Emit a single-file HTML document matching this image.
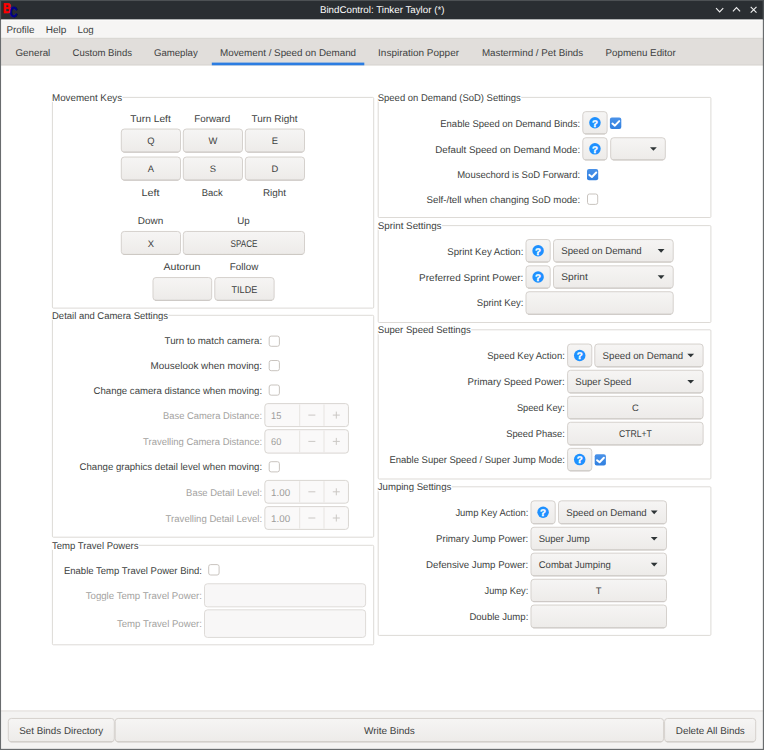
<!DOCTYPE html>
<html lang="en">
<head>
<meta charset="utf-8">
<title>BindControl: Tinker Taylor (*)</title>
<style>
html,body{margin:0;padding:0;background:#fff;overflow:hidden}
svg{display:block;font-family:"Liberation Sans",sans-serif;text-rendering:geometricPrecision}
</style>
</head>
<body>
<svg width="764" height="750" viewBox="0 0 764 750">
<defs><linearGradient id="bg" x1="0" y1="0" x2="0" y2="1"><stop offset="0" stop-color="#f6f5f4"/><stop offset="1" stop-color="#edebe9"/></linearGradient><linearGradient id="cb" x1="0" y1="0" x2="0" y2="1"><stop offset="0" stop-color="#4a92e8"/><stop offset="1" stop-color="#3180e0"/></linearGradient></defs>
<rect x="0.00" y="0.00" width="764.00" height="750.00" fill="#ffffff"/>
<rect x="0.00" y="0.00" width="764.00" height="19.70" fill="#2a2e32"/>
<rect x="0.00" y="19.70" width="764.00" height="18.30" fill="#f6f5f4"/>
<rect x="0.00" y="19.70" width="764.00" height="0.90" fill="#fcfcfb"/>
<rect x="0.00" y="38.00" width="764.00" height="27.40" fill="#e1dedb"/>
<rect x="0.00" y="64.30" width="764.00" height="1.10" fill="#d9d6d3"/>
<rect x="0.00" y="37.80" width="764.00" height="1.00" fill="#d9d6d3"/>
<rect x="0.00" y="710.20" width="764.00" height="39.80" fill="#f4f3f2"/>
<rect x="0.00" y="710.20" width="764.00" height="1.60" fill="#e9e7e4"/>
<rect x="0.00" y="0.00" width="1.05" height="750.00" fill="#696c6e"/>
<rect x="762.85" y="0.00" width="1.15" height="750.00" fill="#696c6e"/>
<rect x="0.00" y="748.85" width="764.00" height="1.15" fill="#696c6e"/>
<rect x="0.00" y="0.00" width="764.00" height="1.05" fill="#4d5154"/>
<rect x="0.00" y="1.00" width="1.05" height="18.70" fill="#4d5154"/>
<rect x="762.85" y="1.00" width="1.15" height="18.70" fill="#4d5154"/>
<text transform="translate(3.1,13.3) scale(0.8,1)" font-size="14" font-weight="bold" fill="#ff0000" stroke="#ff0000" stroke-width="0.7">B</text>
<text transform="translate(9.8,16.8) scale(0.74,1)" font-size="14.4" font-weight="bold" fill="#00008b" stroke="#00008b" stroke-width="0.7">C</text>
<text x="382.20" y="13.15" font-size="9.8" fill="#fcfcfc" text-anchor="middle" textLength="124.50" lengthAdjust="spacingAndGlyphs">BindControl: Tinker Taylor (*)</text>
<path d="M716.05 8.2L719.65 11.9L723.25 8.2" stroke="#eeeeee" stroke-width="1.15" fill="none"/>
<path d="M732.9 11.4L736.5 7.6L740.1 11.4" stroke="#eeeeee" stroke-width="1.15" fill="none"/>
<path d="M750.7 6.8L756.5 12.6M756.5 6.8L750.7 12.6" stroke="#eeeeee" stroke-width="1.15" fill="none"/>
<text x="6.40" y="33.05" font-size="9.8" fill="#3d3f41" textLength="28.00" lengthAdjust="spacingAndGlyphs">Profile</text>
<text x="45.70" y="33.05" font-size="9.8" fill="#3d3f41" textLength="20.70" lengthAdjust="spacingAndGlyphs">Help</text>
<text x="77.50" y="33.05" font-size="9.8" fill="#3d3f41" textLength="16.20" lengthAdjust="spacingAndGlyphs">Log</text>
<text x="15.40" y="55.65" font-size="9.8" fill="#3d3f41" textLength="34.90" lengthAdjust="spacingAndGlyphs">General</text>
<text x="72.50" y="55.65" font-size="9.8" fill="#3d3f41" textLength="59.50" lengthAdjust="spacingAndGlyphs">Custom Binds</text>
<text x="153.90" y="55.65" font-size="9.8" fill="#3d3f41" textLength="43.90" lengthAdjust="spacingAndGlyphs">Gameplay</text>
<text x="220.00" y="55.65" font-size="9.8" fill="#3d3f41" textLength="136.10" lengthAdjust="spacingAndGlyphs">Movement / Speed on Demand</text>
<text x="378.10" y="55.65" font-size="9.8" fill="#3d3f41" textLength="80.90" lengthAdjust="spacingAndGlyphs">Inspiration Popper</text>
<text x="481.90" y="55.65" font-size="9.8" fill="#3d3f41" textLength="101.30" lengthAdjust="spacingAndGlyphs">Mastermind / Pet Binds</text>
<text x="605.50" y="55.65" font-size="9.8" fill="#3d3f41" textLength="70.20" lengthAdjust="spacingAndGlyphs">Popmenu Editor</text>
<rect x="211.80" y="62.60" width="152.50" height="2.70" fill="#2c7de2"/>
<rect x="52.40" y="97.40" width="321.30" height="210.70" rx="1" fill="none" stroke="#d7d3cf" stroke-width="0.85"/>
<rect x="51.90" y="91.90" width="70.60" height="10.00" fill="#ffffff"/>
<text x="52.00" y="100.85" font-size="9.8" fill="#3d3f41" textLength="70.10" lengthAdjust="spacingAndGlyphs">Movement Keys</text>
<text x="150.50" y="121.75" font-size="9.8" fill="#3d3f41" text-anchor="middle" textLength="40.50" lengthAdjust="spacingAndGlyphs">Turn Left</text>
<text x="212.30" y="121.75" font-size="9.8" fill="#3d3f41" text-anchor="middle" textLength="36.00" lengthAdjust="spacingAndGlyphs">Forward</text>
<text x="274.50" y="121.75" font-size="9.8" fill="#3d3f41" text-anchor="middle" textLength="46.00" lengthAdjust="spacingAndGlyphs">Turn Right</text>
<rect x="121.30" y="129.05" width="59.20" height="23.10" rx="3" fill="url(#bg)" stroke="#d5d1cd" stroke-width="1"/>
<path d="M123.30 152.15H178.50" stroke="#ccc8c4" stroke-width="1" fill="none"/>
<text x="151.00" y="143.81" font-size="9.4" fill="#3d3f41" text-anchor="middle">Q</text>
<rect x="183.30" y="129.05" width="59.20" height="23.10" rx="3" fill="url(#bg)" stroke="#d5d1cd" stroke-width="1"/>
<path d="M185.30 152.15H240.50" stroke="#ccc8c4" stroke-width="1" fill="none"/>
<text x="213.00" y="143.81" font-size="9.4" fill="#3d3f41" text-anchor="middle">W</text>
<rect x="245.30" y="129.05" width="59.20" height="23.10" rx="3" fill="url(#bg)" stroke="#d5d1cd" stroke-width="1"/>
<path d="M247.30 152.15H302.50" stroke="#ccc8c4" stroke-width="1" fill="none"/>
<text x="275.00" y="143.81" font-size="9.4" fill="#3d3f41" text-anchor="middle">E</text>
<rect x="121.30" y="157.05" width="59.20" height="23.10" rx="3" fill="url(#bg)" stroke="#d5d1cd" stroke-width="1"/>
<path d="M123.30 180.15H178.50" stroke="#ccc8c4" stroke-width="1" fill="none"/>
<text x="151.00" y="171.91" font-size="9.4" fill="#3d3f41" text-anchor="middle">A</text>
<rect x="183.30" y="157.05" width="59.20" height="23.10" rx="3" fill="url(#bg)" stroke="#d5d1cd" stroke-width="1"/>
<path d="M185.30 180.15H240.50" stroke="#ccc8c4" stroke-width="1" fill="none"/>
<text x="213.00" y="171.91" font-size="9.4" fill="#3d3f41" text-anchor="middle">S</text>
<rect x="245.30" y="157.05" width="59.20" height="23.10" rx="3" fill="url(#bg)" stroke="#d5d1cd" stroke-width="1"/>
<path d="M247.30 180.15H302.50" stroke="#ccc8c4" stroke-width="1" fill="none"/>
<text x="275.00" y="171.91" font-size="9.4" fill="#3d3f41" text-anchor="middle">D</text>
<text x="150.50" y="195.85" font-size="9.8" fill="#3d3f41" text-anchor="middle" textLength="18.00" lengthAdjust="spacingAndGlyphs">Left</text>
<text x="212.30" y="195.85" font-size="9.8" fill="#3d3f41" text-anchor="middle" textLength="21.00" lengthAdjust="spacingAndGlyphs">Back</text>
<text x="274.50" y="195.85" font-size="9.8" fill="#3d3f41" text-anchor="middle" textLength="23.00" lengthAdjust="spacingAndGlyphs">Right</text>
<text x="150.50" y="224.25" font-size="9.8" fill="#3d3f41" text-anchor="middle" textLength="25.50" lengthAdjust="spacingAndGlyphs">Down</text>
<text x="243.50" y="224.25" font-size="9.8" fill="#3d3f41" text-anchor="middle" textLength="12.50" lengthAdjust="spacingAndGlyphs">Up</text>
<rect x="121.30" y="231.45" width="59.20" height="23.00" rx="3" fill="url(#bg)" stroke="#d5d1cd" stroke-width="1"/>
<path d="M123.30 254.45H178.50" stroke="#ccc8c4" stroke-width="1" fill="none"/>
<text x="151.00" y="246.81" font-size="9.4" fill="#3d3f41" text-anchor="middle">X</text>
<rect x="183.30" y="231.45" width="121.20" height="23.00" rx="3" fill="url(#bg)" stroke="#d5d1cd" stroke-width="1"/>
<path d="M185.30 254.45H302.50" stroke="#ccc8c4" stroke-width="1" fill="none"/>
<text x="244.00" y="247.05" font-size="9.8" fill="#3d3f41" text-anchor="middle" textLength="26.90" lengthAdjust="spacingAndGlyphs">SPACE</text>
<text x="182.00" y="270.45" font-size="9.8" fill="#3d3f41" text-anchor="middle" textLength="37.00" lengthAdjust="spacingAndGlyphs">Autorun</text>
<text x="244.00" y="270.45" font-size="9.8" fill="#3d3f41" text-anchor="middle" textLength="28.50" lengthAdjust="spacingAndGlyphs">Follow</text>
<rect x="153.00" y="277.55" width="58.70" height="22.80" rx="3" fill="url(#bg)" stroke="#d5d1cd" stroke-width="1"/>
<path d="M155.00 300.35H209.70" stroke="#ccc8c4" stroke-width="1" fill="none"/>
<rect x="214.80" y="277.55" width="59.30" height="22.80" rx="3" fill="url(#bg)" stroke="#d5d1cd" stroke-width="1"/>
<path d="M216.80 300.35H272.10" stroke="#ccc8c4" stroke-width="1" fill="none"/>
<text x="244.40" y="293.05" font-size="9.8" fill="#3d3f41" text-anchor="middle" textLength="25.70" lengthAdjust="spacingAndGlyphs">TILDE</text>
<rect x="52.40" y="315.30" width="321.30" height="221.90" rx="1" fill="none" stroke="#d7d3cf" stroke-width="0.85"/>
<rect x="51.90" y="309.80" width="116.50" height="10.00" fill="#ffffff"/>
<text x="52.00" y="318.75" font-size="9.8" fill="#3d3f41" textLength="116.00" lengthAdjust="spacingAndGlyphs">Detail and Camera Settings</text>
<text x="262.10" y="344.45" font-size="9.8" fill="#3d3f41" text-anchor="end" textLength="97.50" lengthAdjust="spacingAndGlyphs">Turn to match camera:</text>
<text x="262.10" y="368.95" font-size="9.8" fill="#3d3f41" text-anchor="end" textLength="111.50" lengthAdjust="spacingAndGlyphs">Mouselook when moving:</text>
<text x="262.10" y="393.65" font-size="9.8" fill="#3d3f41" text-anchor="end" textLength="168.50" lengthAdjust="spacingAndGlyphs">Change camera distance when moving:</text>
<text x="262.10" y="418.85" font-size="9.8" fill="#a3a2a0" text-anchor="end" textLength="99.00" lengthAdjust="spacingAndGlyphs">Base Camera Distance:</text>
<text x="262.10" y="444.85" font-size="9.8" fill="#a3a2a0" text-anchor="end" textLength="119.00" lengthAdjust="spacingAndGlyphs">Travelling Camera Distance:</text>
<text x="262.10" y="470.15" font-size="9.8" fill="#3d3f41" text-anchor="end" textLength="182.50" lengthAdjust="spacingAndGlyphs">Change graphics detail level when moving:</text>
<text x="262.10" y="495.85" font-size="9.8" fill="#a3a2a0" text-anchor="end" textLength="76.00" lengthAdjust="spacingAndGlyphs">Base Detail Level:</text>
<text x="262.10" y="522.05" font-size="9.8" fill="#a3a2a0" text-anchor="end" textLength="96.50" lengthAdjust="spacingAndGlyphs">Travelling Detail Level:</text>
<rect x="269.20" y="336.10" width="10.20" height="10.20" rx="2" fill="#ffffff" stroke="#c9c4bf" stroke-width="1"/>
<rect x="269.20" y="360.50" width="10.20" height="10.20" rx="2" fill="#ffffff" stroke="#c9c4bf" stroke-width="1"/>
<rect x="269.20" y="385.00" width="10.20" height="10.20" rx="2" fill="#ffffff" stroke="#c9c4bf" stroke-width="1"/>
<rect x="269.20" y="461.70" width="10.20" height="10.20" rx="2" fill="#ffffff" stroke="#c9c4bf" stroke-width="1"/>
<rect x="264.85" y="403.60" width="83.60" height="23.00" rx="3" fill="#faf9f9" stroke="#d9d6d2" stroke-width="1"/>
<path d="M299.70 404.40V425.80M324.00 404.40V425.80" stroke="#e7e4e1" stroke-width="1" fill="none"/>
<text x="271.10" y="418.55" font-size="9.8" fill="#9d9c9a" textLength="10.30" lengthAdjust="spacingAndGlyphs">15</text>
<path d="M308.35 415.10H315.35M332.80 415.10H339.80M336.30 411.60V418.60" stroke="#cac7c4" stroke-width="1" fill="none"/>
<rect x="264.85" y="429.70" width="83.60" height="23.40" rx="3" fill="#faf9f9" stroke="#d9d6d2" stroke-width="1"/>
<path d="M299.70 430.50V452.30M324.00 430.50V452.30" stroke="#e7e4e1" stroke-width="1" fill="none"/>
<text x="271.10" y="444.85" font-size="9.8" fill="#9d9c9a" textLength="10.30" lengthAdjust="spacingAndGlyphs">60</text>
<path d="M308.35 441.40H315.35M332.80 441.40H339.80M336.30 437.90V444.90" stroke="#cac7c4" stroke-width="1" fill="none"/>
<rect x="264.85" y="480.40" width="83.60" height="22.80" rx="3" fill="#faf9f9" stroke="#d9d6d2" stroke-width="1"/>
<path d="M299.70 481.20V502.40M324.00 481.20V502.40" stroke="#e7e4e1" stroke-width="1" fill="none"/>
<text x="271.10" y="495.75" font-size="9.8" fill="#9d9c9a" textLength="19.10" lengthAdjust="spacingAndGlyphs">1.00</text>
<path d="M308.35 491.80H315.35M332.80 491.80H339.80M336.30 488.30V495.30" stroke="#cac7c4" stroke-width="1" fill="none"/>
<rect x="264.85" y="506.60" width="83.60" height="22.80" rx="3" fill="#faf9f9" stroke="#d9d6d2" stroke-width="1"/>
<path d="M299.70 507.40V528.60M324.00 507.40V528.60" stroke="#e7e4e1" stroke-width="1" fill="none"/>
<text x="271.10" y="521.95" font-size="9.8" fill="#9d9c9a" textLength="19.10" lengthAdjust="spacingAndGlyphs">1.00</text>
<path d="M308.35 518.00H315.35M332.80 518.00H339.80M336.30 514.50V521.50" stroke="#cac7c4" stroke-width="1" fill="none"/>
<rect x="52.40" y="545.30" width="321.30" height="99.50" rx="1" fill="none" stroke="#d7d3cf" stroke-width="0.85"/>
<rect x="51.90" y="539.80" width="87.00" height="10.00" fill="#ffffff"/>
<text x="52.00" y="548.75" font-size="9.8" fill="#3d3f41" textLength="86.50" lengthAdjust="spacingAndGlyphs">Temp Travel Powers</text>
<text x="201.90" y="573.65" font-size="9.8" fill="#3d3f41" text-anchor="end" textLength="138.00" lengthAdjust="spacingAndGlyphs">Enable Temp Travel Power Bind:</text>
<text x="201.90" y="598.95" font-size="9.8" fill="#a3a2a0" text-anchor="end" textLength="116.20" lengthAdjust="spacingAndGlyphs">Toggle Temp Travel Power:</text>
<text x="201.90" y="627.25" font-size="9.8" fill="#a3a2a0" text-anchor="end" textLength="85.00" lengthAdjust="spacingAndGlyphs">Temp Travel Power:</text>
<rect x="208.70" y="564.60" width="10.40" height="10.40" rx="2" fill="#ffffff" stroke="#c9c4bf" stroke-width="1"/>
<rect x="204.50" y="583.75" width="161.10" height="23.10" rx="3" fill="#f8f7f7" stroke="#deDBd8" stroke-width="1"/>
<rect x="204.50" y="609.85" width="161.10" height="27.60" rx="3" fill="#f8f7f7" stroke="#deDBd8" stroke-width="1"/>
<rect x="378.20" y="97.40" width="332.70" height="120.10" rx="1" fill="none" stroke="#d7d3cf" stroke-width="0.85"/>
<rect x="377.70" y="91.90" width="143.50" height="10.00" fill="#ffffff"/>
<text x="377.80" y="100.85" font-size="9.8" fill="#3d3f41" textLength="143.00" lengthAdjust="spacingAndGlyphs">Speed on Demand (SoD) Settings</text>
<text x="580.20" y="126.75" font-size="9.8" fill="#3d3f41" text-anchor="end" textLength="139.90" lengthAdjust="spacingAndGlyphs">Enable Speed on Demand Binds:</text>
<text x="580.20" y="152.85" font-size="9.8" fill="#3d3f41" text-anchor="end" textLength="144.90" lengthAdjust="spacingAndGlyphs">Default Speed on Demand Mode:</text>
<text x="580.20" y="178.25" font-size="9.8" fill="#3d3f41" text-anchor="end" textLength="123.00" lengthAdjust="spacingAndGlyphs">Mousechord is SoD Forward:</text>
<text x="580.20" y="202.85" font-size="9.8" fill="#3d3f41" text-anchor="end" textLength="153.60" lengthAdjust="spacingAndGlyphs">Self-/tell when changing SoD mode:</text>
<rect x="582.80" y="111.65" width="24.30" height="22.30" rx="3" fill="url(#bg)" stroke="#d5d1cd" stroke-width="1"/>
<path d="M584.80 133.95H605.10" stroke="#ccc8c4" stroke-width="1" fill="none"/>
<circle cx="594.95" cy="122.80" r="5.75" fill="#1e90ff"/>
<text x="594.95" y="126.55" font-size="9.8" fill="#ffffff" text-anchor="middle" font-weight="bold" stroke="#fff" stroke-width="0.35">?</text>
<rect x="609.90" y="117.60" width="11.40" height="11.30" rx="2" fill="url(#cb)"/>
<path d="M612.40 123.55L614.90 125.65L619.20 121.15" stroke="#fff" stroke-width="2" fill="none" stroke-linecap="round" stroke-linejoin="round"/>
<rect x="582.80" y="137.75" width="24.30" height="22.20" rx="3" fill="url(#bg)" stroke="#d5d1cd" stroke-width="1"/>
<path d="M584.80 159.95H605.10" stroke="#ccc8c4" stroke-width="1" fill="none"/>
<circle cx="594.95" cy="148.85" r="5.75" fill="#1e90ff"/>
<text x="594.95" y="152.60" font-size="9.8" fill="#ffffff" text-anchor="middle" font-weight="bold" stroke="#fff" stroke-width="0.35">?</text>
<rect x="610.70" y="137.75" width="54.60" height="22.20" rx="3" fill="url(#bg)" stroke="#d5d1cd" stroke-width="1"/>
<path d="M612.70 159.95H663.30" stroke="#ccc8c4" stroke-width="1" fill="none"/>
<path d="M650.00 147.15H656.80L653.40 150.75Z" fill="#2e3436"/>
<rect x="587.00" y="169.00" width="11.20" height="11.20" rx="2" fill="url(#cb)"/>
<path d="M589.40 174.90L591.90 177.00L596.20 172.50" stroke="#fff" stroke-width="2" fill="none" stroke-linecap="round" stroke-linejoin="round"/>
<rect x="587.50" y="194.00" width="10.20" height="10.40" rx="2" fill="#ffffff" stroke="#c9c4bf" stroke-width="1"/>
<rect x="378.20" y="225.60" width="332.70" height="96.90" rx="1" fill="none" stroke="#d7d3cf" stroke-width="0.85"/>
<rect x="377.70" y="220.10" width="64.20" height="10.00" fill="#ffffff"/>
<text x="377.80" y="229.05" font-size="9.8" fill="#3d3f41" textLength="63.70" lengthAdjust="spacingAndGlyphs">Sprint Settings</text>
<text x="523.40" y="254.65" font-size="9.8" fill="#3d3f41" text-anchor="end" textLength="76.20" lengthAdjust="spacingAndGlyphs">Sprint Key Action:</text>
<text x="523.40" y="280.75" font-size="9.8" fill="#3d3f41" text-anchor="end" textLength="104.30" lengthAdjust="spacingAndGlyphs">Preferred Sprint Power:</text>
<text x="523.40" y="306.45" font-size="9.8" fill="#3d3f41" text-anchor="end" textLength="46.60" lengthAdjust="spacingAndGlyphs">Sprint Key:</text>
<rect x="526.00" y="239.55" width="24.20" height="22.50" rx="3" fill="url(#bg)" stroke="#d5d1cd" stroke-width="1"/>
<path d="M528.00 262.05H548.20" stroke="#ccc8c4" stroke-width="1" fill="none"/>
<circle cx="538.10" cy="250.80" r="5.75" fill="#1e90ff"/>
<text x="538.10" y="254.55" font-size="9.8" fill="#ffffff" text-anchor="middle" font-weight="bold" stroke="#fff" stroke-width="0.35">?</text>
<rect x="553.50" y="239.55" width="119.70" height="22.50" rx="3" fill="url(#bg)" stroke="#d5d1cd" stroke-width="1"/>
<path d="M555.50 262.05H671.20" stroke="#ccc8c4" stroke-width="1" fill="none"/>
<text x="561.30" y="254.25" font-size="9.8" fill="#3d3f41" textLength="80.40" lengthAdjust="spacingAndGlyphs">Speed on Demand</text>
<path d="M657.70 249.10H664.50L661.10 252.70Z" fill="#2e3436"/>
<rect x="526.00" y="265.85" width="24.20" height="22.30" rx="3" fill="url(#bg)" stroke="#d5d1cd" stroke-width="1"/>
<path d="M528.00 288.15H548.20" stroke="#ccc8c4" stroke-width="1" fill="none"/>
<circle cx="538.10" cy="277.00" r="5.75" fill="#1e90ff"/>
<text x="538.10" y="280.75" font-size="9.8" fill="#ffffff" text-anchor="middle" font-weight="bold" stroke="#fff" stroke-width="0.35">?</text>
<rect x="553.50" y="265.85" width="119.70" height="22.30" rx="3" fill="url(#bg)" stroke="#d5d1cd" stroke-width="1"/>
<path d="M555.50 288.15H671.20" stroke="#ccc8c4" stroke-width="1" fill="none"/>
<text x="561.30" y="280.45" font-size="9.8" fill="#3d3f41" textLength="26.50" lengthAdjust="spacingAndGlyphs">Sprint</text>
<path d="M657.70 275.30H664.50L661.10 278.90Z" fill="#2e3436"/>
<rect x="526.00" y="291.75" width="147.20" height="22.50" rx="3" fill="url(#bg)" stroke="#d5d1cd" stroke-width="1"/>
<path d="M528.00 314.25H671.20" stroke="#ccc8c4" stroke-width="1" fill="none"/>
<rect x="378.20" y="329.80" width="332.70" height="149.20" rx="1" fill="none" stroke="#d7d3cf" stroke-width="0.85"/>
<rect x="377.70" y="324.30" width="93.50" height="10.00" fill="#ffffff"/>
<text x="377.80" y="333.25" font-size="9.8" fill="#3d3f41" textLength="93.00" lengthAdjust="spacingAndGlyphs">Super Speed Settings</text>
<text x="564.80" y="359.25" font-size="9.8" fill="#3d3f41" text-anchor="end" textLength="77.50" lengthAdjust="spacingAndGlyphs">Speed Key Action:</text>
<text x="564.80" y="385.35" font-size="9.8" fill="#3d3f41" text-anchor="end" textLength="97.20" lengthAdjust="spacingAndGlyphs">Primary Speed Power:</text>
<text x="564.80" y="411.25" font-size="9.8" fill="#3d3f41" text-anchor="end" textLength="47.90" lengthAdjust="spacingAndGlyphs">Speed Key:</text>
<text x="564.80" y="437.35" font-size="9.8" fill="#3d3f41" text-anchor="end" textLength="58.60" lengthAdjust="spacingAndGlyphs">Speed Phase:</text>
<text x="564.80" y="463.25" font-size="9.8" fill="#3d3f41" text-anchor="end" textLength="175.30" lengthAdjust="spacingAndGlyphs">Enable Super Speed / Super Jump Mode:</text>
<rect x="567.60" y="344.05" width="24.20" height="22.80" rx="3" fill="url(#bg)" stroke="#d5d1cd" stroke-width="1"/>
<path d="M569.60 366.85H589.80" stroke="#ccc8c4" stroke-width="1" fill="none"/>
<circle cx="579.70" cy="355.45" r="5.75" fill="#1e90ff"/>
<text x="579.70" y="359.20" font-size="9.8" fill="#ffffff" text-anchor="middle" font-weight="bold" stroke="#fff" stroke-width="0.35">?</text>
<rect x="594.80" y="344.05" width="108.30" height="22.80" rx="3" fill="url(#bg)" stroke="#d5d1cd" stroke-width="1"/>
<path d="M596.80 366.85H701.10" stroke="#ccc8c4" stroke-width="1" fill="none"/>
<text x="602.60" y="358.90" font-size="9.8" fill="#3d3f41" textLength="80.60" lengthAdjust="spacingAndGlyphs">Speed on Demand</text>
<path d="M687.30 353.75H694.10L690.70 357.35Z" fill="#2e3436"/>
<rect x="567.60" y="370.25" width="135.50" height="22.70" rx="3" fill="url(#bg)" stroke="#d5d1cd" stroke-width="1"/>
<path d="M569.60 392.95H701.10" stroke="#ccc8c4" stroke-width="1" fill="none"/>
<text x="575.30" y="385.05" font-size="9.8" fill="#3d3f41" textLength="56.00" lengthAdjust="spacingAndGlyphs">Super Speed</text>
<path d="M687.30 379.90H694.10L690.70 383.50Z" fill="#2e3436"/>
<rect x="567.60" y="396.35" width="135.50" height="22.50" rx="3" fill="url(#bg)" stroke="#d5d1cd" stroke-width="1"/>
<path d="M569.60 418.85H701.10" stroke="#ccc8c4" stroke-width="1" fill="none"/>
<text x="635.40" y="411.21" font-size="9.4" fill="#3d3f41" text-anchor="middle">C</text>
<rect x="567.60" y="422.25" width="135.50" height="22.70" rx="3" fill="url(#bg)" stroke="#d5d1cd" stroke-width="1"/>
<path d="M569.60 444.95H701.10" stroke="#ccc8c4" stroke-width="1" fill="none"/>
<text x="635.40" y="437.35" font-size="9.8" fill="#3d3f41" text-anchor="middle" textLength="33.00" lengthAdjust="spacingAndGlyphs">CTRL+T</text>
<rect x="567.60" y="448.35" width="24.20" height="22.50" rx="3" fill="url(#bg)" stroke="#d5d1cd" stroke-width="1"/>
<path d="M569.60 470.85H589.80" stroke="#ccc8c4" stroke-width="1" fill="none"/>
<circle cx="579.70" cy="459.60" r="5.75" fill="#1e90ff"/>
<text x="579.70" y="463.35" font-size="9.8" fill="#ffffff" text-anchor="middle" font-weight="bold" stroke="#fff" stroke-width="0.35">?</text>
<rect x="594.70" y="454.30" width="11.20" height="11.20" rx="2" fill="url(#cb)"/>
<path d="M597.10 460.20L599.60 462.30L603.90 457.80" stroke="#fff" stroke-width="2" fill="none" stroke-linecap="round" stroke-linejoin="round"/>
<rect x="378.20" y="486.80" width="332.70" height="148.60" rx="1" fill="none" stroke="#d7d3cf" stroke-width="0.85"/>
<rect x="377.70" y="481.30" width="74.00" height="10.00" fill="#ffffff"/>
<text x="377.80" y="490.25" font-size="9.8" fill="#3d3f41" textLength="73.50" lengthAdjust="spacingAndGlyphs">Jumping Settings</text>
<text x="528.30" y="516.25" font-size="9.8" fill="#3d3f41" text-anchor="end" textLength="72.90" lengthAdjust="spacingAndGlyphs">Jump Key Action:</text>
<text x="528.30" y="542.35" font-size="9.8" fill="#3d3f41" text-anchor="end" textLength="92.30" lengthAdjust="spacingAndGlyphs">Primary Jump Power:</text>
<text x="528.30" y="568.25" font-size="9.8" fill="#3d3f41" text-anchor="end" textLength="102.20" lengthAdjust="spacingAndGlyphs">Defensive Jump Power:</text>
<text x="528.30" y="594.35" font-size="9.8" fill="#3d3f41" text-anchor="end" textLength="43.80" lengthAdjust="spacingAndGlyphs">Jump Key:</text>
<text x="528.30" y="620.25" font-size="9.8" fill="#3d3f41" text-anchor="end" textLength="58.90" lengthAdjust="spacingAndGlyphs">Double Jump:</text>
<rect x="531.00" y="500.85" width="24.20" height="22.90" rx="3" fill="url(#bg)" stroke="#d5d1cd" stroke-width="1"/>
<path d="M533.00 523.75H553.20" stroke="#ccc8c4" stroke-width="1" fill="none"/>
<circle cx="543.10" cy="512.30" r="5.75" fill="#1e90ff"/>
<text x="543.10" y="516.05" font-size="9.8" fill="#ffffff" text-anchor="middle" font-weight="bold" stroke="#fff" stroke-width="0.35">?</text>
<rect x="558.50" y="500.85" width="108.00" height="22.90" rx="3" fill="url(#bg)" stroke="#d5d1cd" stroke-width="1"/>
<path d="M560.50 523.75H664.50" stroke="#ccc8c4" stroke-width="1" fill="none"/>
<text x="566.30" y="515.75" font-size="9.8" fill="#3d3f41" textLength="80.30" lengthAdjust="spacingAndGlyphs">Speed on Demand</text>
<path d="M650.80 510.60H657.60L654.20 514.20Z" fill="#2e3436"/>
<rect x="531.00" y="527.25" width="135.50" height="22.70" rx="3" fill="url(#bg)" stroke="#d5d1cd" stroke-width="1"/>
<path d="M533.00 549.95H664.50" stroke="#ccc8c4" stroke-width="1" fill="none"/>
<text x="538.70" y="542.05" font-size="9.8" fill="#3d3f41" textLength="51.10" lengthAdjust="spacingAndGlyphs">Super Jump</text>
<path d="M650.80 536.90H657.60L654.20 540.50Z" fill="#2e3436"/>
<rect x="531.00" y="553.15" width="135.50" height="22.70" rx="3" fill="url(#bg)" stroke="#d5d1cd" stroke-width="1"/>
<path d="M533.00 575.85H664.50" stroke="#ccc8c4" stroke-width="1" fill="none"/>
<text x="538.70" y="567.95" font-size="9.8" fill="#3d3f41" textLength="72.10" lengthAdjust="spacingAndGlyphs">Combat Jumping</text>
<path d="M650.80 562.80H657.60L654.20 566.40Z" fill="#2e3436"/>
<rect x="531.00" y="579.25" width="135.50" height="22.40" rx="3" fill="url(#bg)" stroke="#d5d1cd" stroke-width="1"/>
<path d="M533.00 601.65H664.50" stroke="#ccc8c4" stroke-width="1" fill="none"/>
<text x="598.60" y="594.01" font-size="9.4" fill="#3d3f41" text-anchor="middle">T</text>
<rect x="531.00" y="605.05" width="135.50" height="22.80" rx="3" fill="url(#bg)" stroke="#d5d1cd" stroke-width="1"/>
<path d="M533.00 627.85H664.50" stroke="#ccc8c4" stroke-width="1" fill="none"/>
<rect x="8.30" y="718.45" width="106.00" height="23.40" rx="3" fill="url(#bg)" stroke="#d5d1cd" stroke-width="1"/>
<path d="M10.30 741.85H112.30" stroke="#ccc8c4" stroke-width="1" fill="none"/>
<text x="61.20" y="733.65" font-size="9.8" fill="#3d3f41" text-anchor="middle" textLength="84.00" lengthAdjust="spacingAndGlyphs">Set Binds Directory</text>
<rect x="115.20" y="718.45" width="548.40" height="23.40" rx="3" fill="url(#bg)" stroke="#d5d1cd" stroke-width="1"/>
<path d="M117.20 741.85H661.60" stroke="#ccc8c4" stroke-width="1" fill="none"/>
<text x="389.40" y="733.65" font-size="9.8" fill="#3d3f41" text-anchor="middle" textLength="51.00" lengthAdjust="spacingAndGlyphs">Write Binds</text>
<rect x="664.60" y="718.45" width="91.10" height="23.40" rx="3" fill="url(#bg)" stroke="#d5d1cd" stroke-width="1"/>
<path d="M666.60 741.85H753.70" stroke="#ccc8c4" stroke-width="1" fill="none"/>
<text x="710.30" y="733.65" font-size="9.8" fill="#3d3f41" text-anchor="middle" textLength="69.00" lengthAdjust="spacingAndGlyphs">Delete All Binds</text>
</svg>
</body>
</html>
